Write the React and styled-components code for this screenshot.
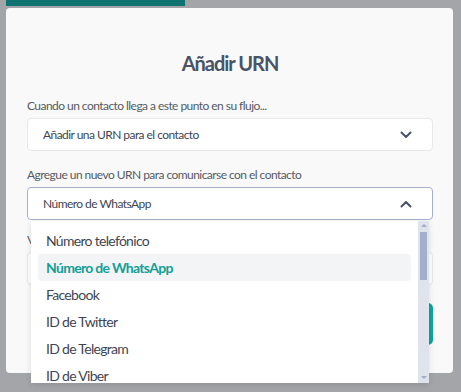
import React from "react";
import styled, { createGlobalStyle } from "styled-components";

const GlobalStyle = createGlobalStyle`
  body {
    margin: 0;
    background: #a4a5a9;
    font-family: Lato, "Open Sans", sans-serif;
  }
`;

const options = [
  "Número telefónico",
  "Número de WhatsApp",
  "Facebook",
  "ID de Twitter",
  "ID de Telegram",
  "ID de Viber",
  "Correo electrónico",
];

const Chevron = ({ up }) => (
  <svg width="12" height="8" viewBox="0 0 12 8">
    <path
      d={up ? "M1.5 6.5 L6 2 L10.5 6.5" : "M1.5 1.5 L6 6 L10.5 1.5"}
      fill="none"
      stroke="#4a5366"
      strokeWidth="2"
      strokeLinecap="round"
      strokeLinejoin="round"
    />
  </svg>
);

export default function App() {
  return (
    <Page>
      <GlobalStyle />
      <TopBar />
      <Card>
        <Title>Añadir URN</Title>

        <Label>Cuando un contacto llega a este punto en su flujo...</Label>
        <Select>
          <span>Añadir una URN para el contacto</span>
          <Chevron />
        </Select>

        <Label top={16}>Agregue un nuevo URN para comunicarse con el contacto</Label>
        <SelectWrap>
          <Select focused>
            <span>Número de WhatsApp</span>
            <Chevron up />
          </Select>
          <Menu>
            <ItemList>
              {options.map((o, i) => (
                <Item key={o} active={i === 1}>{o}</Item>
              ))}
            </ItemList>
            <ScrollTrack>
              <Arrow />
              <Thumb />
              <Spacer />
              <Arrow down />
            </ScrollTrack>
          </Menu>
        </SelectWrap>

        <Label top={12}>Valor de la URN</Label>
        <Input />

        <Footer>
          <Button>Aceptar</Button>
        </Footer>
      </Card>
    </Page>
  );
}

const Page = styled.div`
  height: 392px;
  overflow: hidden;
`;

const TopBar = styled.div`
  width: 179px;
  height: 6px;
  margin-left: 6px;
  background: #0f7471;
`;

const Card = styled.div`
  margin: 2px 8px 0 6px;
  height: 365px;
  box-sizing: border-box;
  padding: 43px 20px 0 21px;
  background: #f9f9f9;
  border-radius: 4px;
  display: flex;
  flex-direction: column;
`;

const Title = styled.h1`
  margin: 0 0 23px;
  text-align: center;
  font-size: 20px;
  line-height: 24px;
  font-weight: 700;
  letter-spacing: -1px;
  color: #4a5366;
`;

const Label = styled.div`
  margin-top: ${(p) => p.top || 0}px;
  margin-bottom: 4px;
  font-size: 12px;
  line-height: 16px;
  letter-spacing: -0.55px;
  color: #565b63;
`;

const SelectWrap = styled.div`
  position: relative;
`;

const Select = styled.div`
  height: 33px;
  box-sizing: border-box;
  display: flex;
  align-items: center;
  justify-content: space-between;
  padding: 0 20px 0 15px;
  background: #fff;
  border: 1px solid ${(p) => (p.focused ? "#a6b0cb" : "#e6e8ec")};
  border-radius: 4px;
  font-size: 12px;
  letter-spacing: -0.55px;
  color: #3f4651;
`;

const Menu = styled.div`
  position: absolute;
  top: 34px;
  left: 4px;
  right: 4px;
  height: 162px;
  background: #fff;
  display: flex;
  box-shadow: 0 2px 6px rgba(0, 0, 0, 0.12);
  z-index: 5;
  overflow: hidden;
`;

const ItemList = styled.div`
  flex: 1;
  padding: 6px 7px 0;
  display: flex;
  flex-direction: column;
`;

const Item = styled.div`
  flex: none;
  height: 27px;
  display: flex;
  align-items: center;
  padding-left: 8px;
  border-radius: 4px;
  font-size: 14px;
  letter-spacing: -0.7px;
  font-weight: ${(p) => (p.active ? 700 : 400)};
  color: ${(p) => (p.active ? "#159e96" : "#3f4651")};
  background: ${(p) => (p.active ? "#f3f4f6" : "transparent")};
`;

const ScrollTrack = styled.div`
  width: 11px;
  background: #dfe3ec;
  display: flex;
  flex-direction: column;
  align-items: center;
  padding: 3px 0 4px;
  box-sizing: border-box;
`;

const Arrow = styled.div`
  width: 0;
  height: 0;
  border-left: 3px solid transparent;
  border-right: 3px solid transparent;
  ${(p) =>
    p.down
      ? "border-top: 3px solid #a3acc3;"
      : "border-bottom: 3px solid #a3acc3;"}
`;

const Thumb = styled.div`
  width: 7px;
  height: 48px;
  margin-top: 5px;
  background: #a3b0cd;
`;

const Spacer = styled.div`
  flex: 1;
`;

const Input = styled.div`
  height: 33px;
  box-sizing: border-box;
  background: #fff;
  border: 1px solid #e6e8ec;
  border-radius: 4px;
`;

const Footer = styled.div`
  display: flex;
  justify-content: flex-end;
  margin-top: 18px;
`;

const Button = styled.button`
  height: 42px;
  width: 130px;
  border: none;
  border-radius: 5px;
  background: #0ea59b;
  color: #fff;
  font-family: inherit;
  font-size: 14px;
  font-weight: 700;
`;
